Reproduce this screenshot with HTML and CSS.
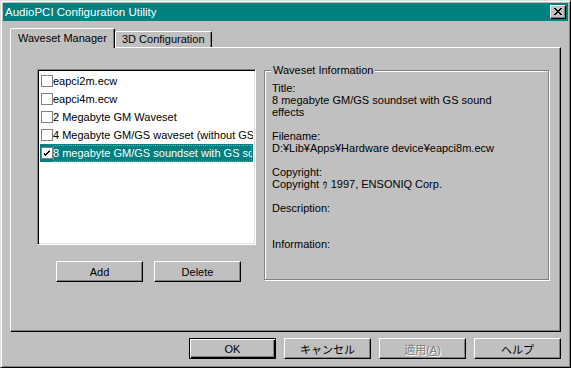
FILE: index.html
```html
<!DOCTYPE html>
<html lang="ja">
<head>
    <meta charset="UTF-8">
    <title>AudioPCI Configuration Utility</title>
    <link rel="stylesheet" href="styles.css">
</head>
<body>
    <div class="window">
        <div class="titlebar">
            <span class="title">AudioPCI Configuration Utility</span>
            <span class="close">
                <svg width="8" height="7" viewBox="0 0 8 7">
                    <path d="M0 0h2v1h-2zM6 0h2v1h-2zM1 1h2v1h-2zM5 1h2v1h-2zM2 2h4v1h-4zM3 3h2v1h-2zM2 4h4v1h-4zM1 5h2v1h-2zM5 5h2v1h-2zM0 6h2v1h-2zM6 6h2v1h-2z" fill="#000"/>
                </svg>
            </span>
        </div>

        <div class="main">
            <div class="tabs">
                <div class="tab active">Waveset Manager</div>
                <div class="tab">3D Configuration</div>
            </div>

            <div class="panel">
                <div class="left">
                    <div class="listbox">
                        <div class="item"><span class="check"></span><span class="label">eapci2m.ecw</span></div>
                        <div class="item"><span class="check"></span><span class="label">eapci4m.ecw</span></div>
                        <div class="item"><span class="check"></span><span class="label">2 Megabyte GM Waveset</span></div>
                        <div class="item"><span class="check"></span><span class="label">4 Megabyte GM/GS waveset (without GS sound effects)</span></div>
                        <div class="item selected">
                            <span class="check">
                                <svg width="7" height="7" viewBox="0 0 7 7"><path d="M6 0v2h-1v1h-1v1h-1v1h-1v1h-1v-1h-1v-1h-1v-2h1v1h1v1h1v-1h1v-1h1v-1h1z" fill="#000"/></svg>
                            </span><span class="label">8 megabyte GM/GS soundset with GS sound effects</span>
                        </div>
                    </div>
                    <div class="listbuttons">
                        <button class="btn">Add</button>
                        <button class="btn">Delete</button>
                    </div>
                </div>

                <div class="group">
                    <span class="legend">Waveset Information</span>
                    <div class="info">
                        <p>Title:<br>8 megabyte GM/GS soundset with GS sound<br>effects</p>
                        <p>Filename:<br>D:¥Lib¥Apps¥Hardware device¥eapci8m.ecw</p>
                        <p>Copyright:<br>Copyright ｩ 1997, ENSONIQ Corp.</p>
                        <p>Description:<br>&nbsp;</p>
                        <p>Information:</p>
                    </div>
                </div>
            </div>

            <div class="dialogbuttons">
                <button class="btn default">OK</button>
                <button class="btn">キャンセル</button>
                <button class="btn disabled">適用(<u>A</u>)</button>
                <button class="btn">ヘルプ</button>
            </div>
        </div>
    </div>
</body>
</html>
```

FILE: styles.css
```css
*{margin: 0; padding: 0; box-sizing: border-box;}
body{background: #c0c0c0; font-family: "Liberation Sans", "Noto Sans CJK JP", sans-serif; font-size: 11px; color: #000;}

.window{width: 571px; height: 368px; background: #c0c0c0; border: 1px solid; border-color: #dfdfdf #000 #000 #dfdfdf; box-shadow: inset 1px 1px #fff, inset -1px -1px #808080; padding: 2px; display: flex; flex-direction: column;}

.titlebar{height: 18px; background: #008080; color: #fff; display: flex; align-items: center; justify-content: space-between; padding: 0 2px 0 2px; font-size: 11.5px;}
.close{width: 16px; height: 14px; background: #c0c0c0; border: 1px solid; border-color: #fff #000 #000 #fff; box-shadow: inset -1px -1px #808080; display: flex; align-items: center; justify-content: center; padding-bottom: 1px;}

.main{padding: 7px 7px 0 7px;}

.tabs{display: flex; align-items: flex-end; height: 19px;}
.tab{height: 16px; padding: 0 6px; border: 1px solid; border-bottom: none; border-color: #fff #000 transparent #fff; box-shadow: inset -1px 0 #808080; border-radius: 2px 2px 0 0; line-height: 15px; background: #c0c0c0;}
.tab.active{height: 20px; width: 105px; margin-bottom: -1px; position: relative; z-index: 1; line-height: 18px; padding: 0 0 0 7px;}

.panel{height: 285px; border: 1px solid; border-color: #fff #000 #000 #fff; box-shadow: inset -1px -1px #808080; display: flex; gap: 8px; padding: 21px 0 0 26px;}

.left{width: 219px;}
.listbox{height: 176px; background: #fff; border: 1px solid; border-color: #808080 #fff #fff #808080; box-shadow: inset 1px 1px #000, inset -1px -1px #dfdfdf; padding: 2px 2px 0 2px; overflow: hidden;}
.item{height: 18px; display: flex; align-items: center; white-space: nowrap; overflow: hidden;}
.check{width: 12px; height: 12px; flex: none; margin: 0 0 0 1px; border: 1px solid #808080; background: #fff; display: flex; align-items: center; justify-content: center;}
.label{padding: 0 2px 0 0; line-height: 16px; overflow: hidden;}
.item.selected{background: #008080;}
.item.selected .label{color: #fff; flex: 1; outline: 1px dotted #f08060; outline-offset: -1px; margin-right: 1px; height: 17px;}

.listbuttons{display: flex; gap: 11px; padding-left: 19px; margin-top: 16px;}

.btn{width: 87px; height: 21px; background: #c0c0c0; font: inherit; color: #000; border: 1px solid; border-color: #fff #000 #000 #fff; box-shadow: inset -1px -1px #808080;}
.btn.default{border-color: #000; box-shadow: inset 1px 1px #fff, inset -1px -1px #000, inset -2px -2px #808080;}
.btn.disabled{color: #808080; text-shadow: 1px 1px #fff;}
.btn u{text-decoration: underline;}

.group{width: 285px; height: 210px; margin-top: 1px; position: relative; border: 1px solid #808080; box-shadow: 1px 1px 0 #fff, inset 1px 1px 0 #fff;}
.legend{position: absolute; top: -7px; left: 6px; background: #c0c0c0; padding: 0 2px; line-height: 12px;}
.info{padding: 11px 0 0 7px; line-height: 12px; white-space: nowrap;}
.info p{margin-bottom: 12px;}

.dialogbuttons{display: flex; justify-content: flex-end; gap: 8px; margin-top: 6px;}
```
